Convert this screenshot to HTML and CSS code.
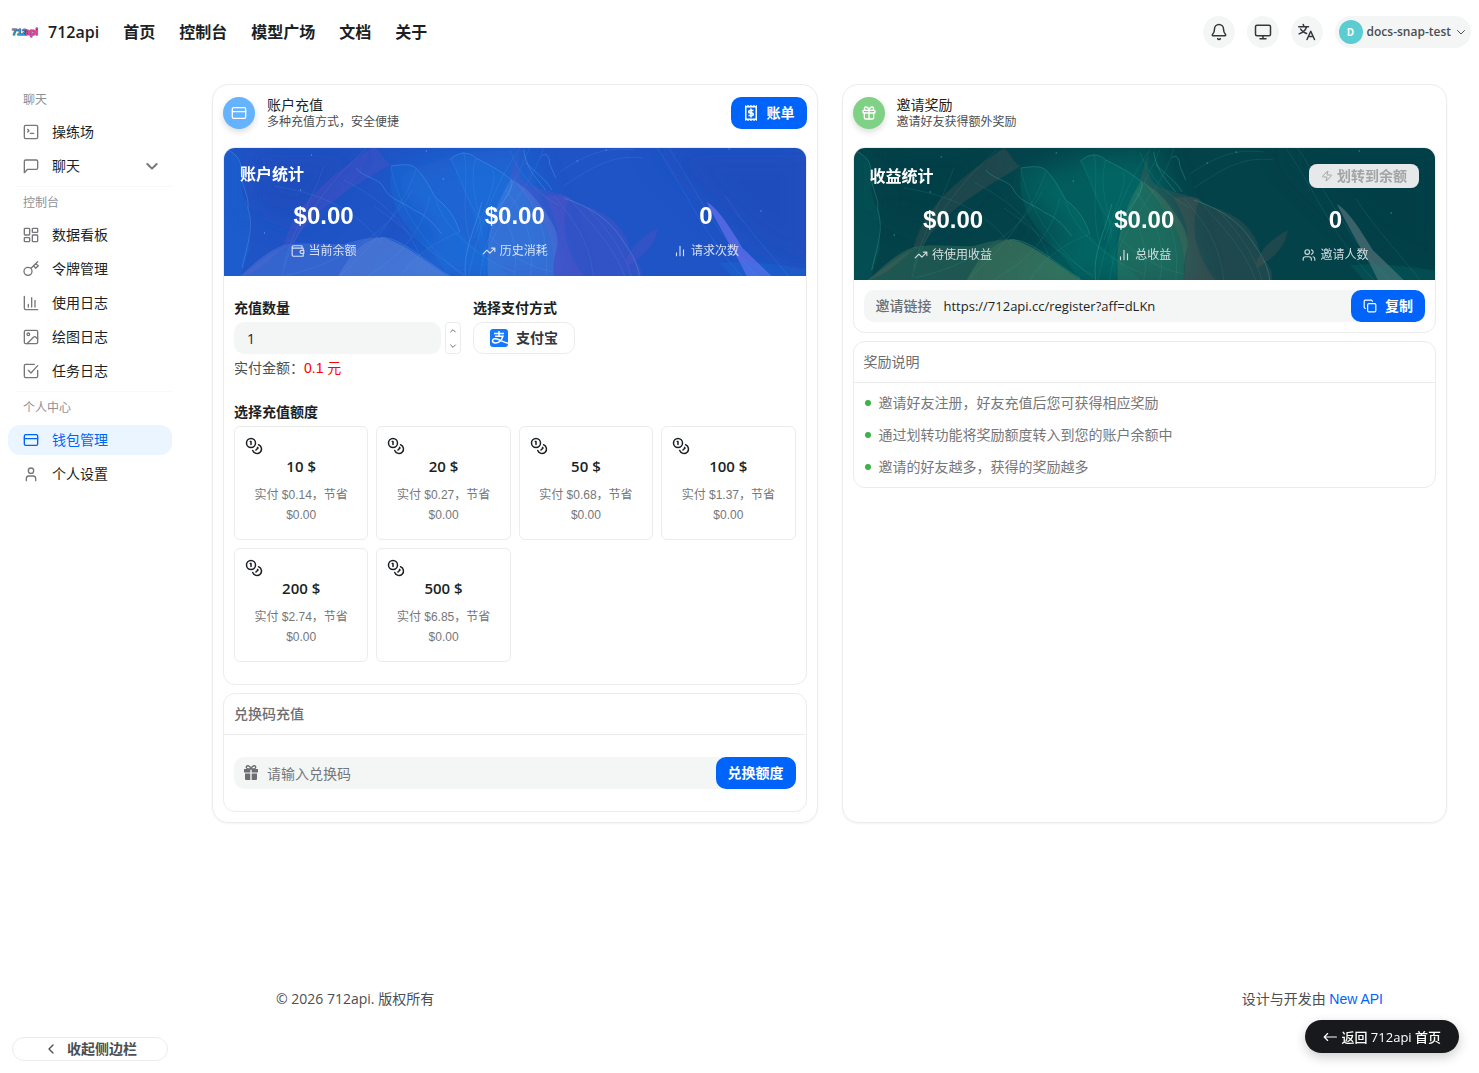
FILE: index.html
```html
<!DOCTYPE html>
<html lang="zh-CN">
  <head>
    <meta charset="UTF-8" />
    <meta name="viewport" content="width=device-width, initial-scale=1.0" />
    <title>712api - 钱包管理</title>
    <link rel="stylesheet" href="styles.css">
  </head>
  <body>
    <!-- shared icons -->
    <svg class="sprite" aria-hidden="true">
      <filter id="soft" x="-50%" y="-50%" width="200%" height="200%"><feGaussianBlur stdDeviation="14" /></filter>
      <symbol id="i-card" viewBox="0 0 24 24"><rect x="2" y="4" width="20" height="16" rx="2" /><path d="M2 10h20" /></symbol>
      <symbol id="i-gift" viewBox="0 0 24 24"><rect x="3" y="8" width="18" height="4" rx="1" /><path d="M12 8v13M19 12v7a2 2 0 0 1-2 2H7a2 2 0 0 1-2-2v-7M7.500 8a2.500 2.500 0 0 1 0-5C11 3 12 8 12 8s1-5 4.500-5a2.500 2.500 0 0 1 0 5" /></symbol>
      <symbol id="i-trend" viewBox="0 0 24 24"><path d="m22 7-8.500 8.500-5-5L2 17M16 7h6v6" /></symbol>
      <symbol id="i-bars" viewBox="0 0 24 24"><path d="M12 20V4M18 20V10M6 20v-5" /></symbol>
      <symbol id="i-down" viewBox="0 0 24 24"><path d="m5 9 7 7 7-7" /></symbol>
      <symbol id="i-coins" viewBox="0 0 24 24"><circle cx="8" cy="8" r="6" /><path d="M18.090 10.370A6 6 0 1 1 10.340 18M7 6h1v4M16.710 13.880l.7.710-2.820 2.820" /></symbol>
      <symbol id="waves" viewBox="0 0 582 132" preserveAspectRatio="xMidYMid slice">
        <g filter="url(#soft)">
          <path class="w-glow" d="M165 30 230 8 300 0 345 132H140L220 95Z" />
          <path class="w-dark" d="M30 0H150L80 80 30 60Z" />
          <path class="w-dark" d="M430 0H590V132L520 90Z" />
        </g>
        <path class="w-fold" d="M0 2c9 3 16 10 17 20 1 14-1 24 6 36 5 14 1 24 3 42-4 14-7 22-9 32H0Z" />
        <path class="w-veil" d="M150 0c8 6 10 16 17 18-34 22-74 40-98 80-14 2-34 18-54 34 20-6 30-18 44-30 10-40 38-66 91-102Z" />
        <path class="w-fold" d="M167 20c14-2 20-2 25 2 10 10 14 20 20 30 14 10 20 22 24 34 12 16 34 26 50 46H225c-20-40-64-50-58-112Z" />
        <path class="w-fold" d="M226 14c10-10 20-8 26-2 12 6 24 12 36 22 2 14-16 24-22 44-6 18-4 36-4 54-10-30-4-60-36-118Z" />
        <path class="w-dome" d="M14 132c16-14 30-28 46-33 20-4 42 0 60-1 14-4 24-7 40-7 22 8 44 26 68 41Z" />
        <path class="w-dome" d="M113 132c10-18 22-36 40-40 26 0 46 24 75 40Z" />
        <path class="w-veil" d="M296 0c-4 22-2 30 8 38 12 6 28 8 42 13-10 24-6 54 16 81h-32c4-34-8-66-44-100Z" />
        <path class="w-dome" d="M287 33c16 8 26 20 34 32 10 14 14 24 13 34-4 12-4 22-4 33h-66c0-26-4-54 23-99Z" />
        <path class="w-veil" d="M320 50c10-2 20-2 26 2 8 6 18 8 26 12 14 6 22 14 28 24 6 8 4 14 8 22 6 6 12 14 10 22h-88c0-30 14-40-10-82Z" />
        <path class="w-veil" d="M402 116c4-14 14-24 32-34-2 16-12 26-30 38Z" />
        <path class="w-spike" d="M483 56c12 6 26 30 36 46l31 30h-26c-10-22-26-46-41-76Z" />
        <path class="w-fold" d="M496 117c30-2 56 1 86 6v9h-72Z" />
        <path class="w-line" d="M143 2C110 30 70 80 58 130M100 20C90 50 66 90 60 120M50 40C90 46 130 60 158 98M167 20C174 60 200 100 240 130M192 24C180 60 150 100 116 130M206 50C200 80 180 110 140 132M150 60C180 80 210 110 240 128M120 34C150 50 180 70 196 110M188 44C170 80 120 118 60 130M212 54C220 80 250 110 290 126M236 86C210 96 190 110 176 132M228 14C240 40 244 60 262 80M252 12C244 40 256 60 258 90M240 6C246 30 236 60 246 96M268 24C276 30 262 60 250 92M296 2C270 40 256 80 244 132M306 2C290 40 262 80 256 132M320 0C310 40 280 60 262 110M286 4C296 30 312 46 336 60M290 34C316 60 326 96 322 132M282 44C304 72 312 100 306 132M276 60C292 90 294 110 290 132M266 90C280 104 300 120 330 126M345 52C370 80 390 100 402 132M330 50C356 80 366 100 370 132M364 62C384 84 400 104 408 132M336 26C360 10 380 0 410 4M340 40C370 20 390 8 420 12M432 0C460 40 480 90 520 132M444 0C470 40 500 100 536 132M502 50C520 80 550 110 566 132" />
        <path class="w-bright" d="M0 2c14 6 18 14 17 24 2 20 8 22 7 36 6 20 0 34-6 60M132 22c8 10 24 10 28 20 6 12 20 14 30 22 14 6 20 14 28 24M167 20c14-2 20-2 25 2 10 10 14 20 20 30 14 10 20 22 24 34M226 14c10-10 20-8 26-2 12 6 24 12 36 22 2 14-14 24-20 40M258 56c-6 26-20 50-16 76M302 16c8 10 20 16 26 28M318 10c4-4 8 0 8 8l6 14M300 4c2 16 10 26 22 40M340 52c24 8 44 20 56 38 8 12 18 24 20 42M156 92c20-2 40 20 70 38" />
        <path class="w-dots" d="M87 9h1M202 5h1M40 87h1M353 15h1M382 4h1M505 3h1M537 65h1M219 33h1M76 44h1" />
      </symbol>
    </svg>

    <header class="topbar">
      <a class="brand" href="#">
        <svg class="brand-logo" viewBox="0 0 32 18" aria-hidden="true">
          <text class="logo-num" x="4" y="12">712</text>
          <text class="logo-api" x="17" y="12">api</text>
        </svg>
        <span>712api</span>
      </a>
      <nav class="topnav">
        <a href="#">首页</a>
        <a href="#">控制台</a>
        <a href="#">模型广场</a>
        <a href="#">文档</a>
        <a href="#">关于</a>
      </nav>
      <div class="tools">
        <button class="round" aria-label="通知"><svg class="icon i18" viewBox="0 0 24 24"><path d="M10.300 21a2 2 0 0 0 3.400 0M3.300 15.300A1 1 0 0 0 4 17h16a1 1 0 0 0 .7-1.700C19.400 14 18 12.500 18 8A6 6 0 0 0 6 8c0 4.500-1.400 6-2.700 7.300Z" /></svg></button>
        <button class="round" aria-label="主题"><svg class="icon i18" viewBox="0 0 24 24"><rect x="2" y="3" width="20" height="14" rx="2" /><path d="M8 21h8M12 17v4" /></svg></button>
        <button class="round" aria-label="语言"><svg class="icon i18" viewBox="0 0 24 24"><path d="M1 5h13M7 2l1 3M3.500 8c1.500 3 5 5 8 6M11.500 5C10 10 6 13 1.500 14.500M12 22l5-11 5 11M13.800 18h6.400" /></svg></button>
        <button class="user">
          <span class="user-avatar">D</span>
          <span>docs-snap-test</span>
          <svg class="icon i12"><use href="#i-down" /></svg>
        </button>
      </div>
    </header>

    <div class="layout">
      <aside class="sidebar">
        <div class="group">
          <p class="group-title">聊天</p>
          <ul>
            <li><a href="#"><svg class="icon i16" viewBox="0 0 24 24"><rect x="2" y="2" width="20" height="20" rx="2" /><path d="m7 12 2-2-2-2M11 14h5" /></svg>操练场</a></li>
            <li><a href="#"><svg class="icon i16" viewBox="0 0 24 24"><path d="M22 15a2 2 0 0 1-2 2H7l-5 5V5a2 2 0 0 1 2-2h16a2 2 0 0 1 2 2Z" /></svg>聊天<svg class="icon i16 arrow"><use href="#i-down" /></svg></a></li>
          </ul>
        </div>
        <div class="group">
          <p class="group-title">控制台</p>
          <ul>
            <li><a href="#"><svg class="icon i16" viewBox="0 0 24 24"><rect x="2" y="2" width="8" height="10" rx="1" /><rect x="14" y="2" width="8" height="6" rx="1" /><rect x="14" y="12" width="8" height="10" rx="1" /><rect x="2" y="16" width="8" height="6" rx="1" /></svg>数据看板</a></li>
            <li><a href="#"><svg class="icon i16" viewBox="0 0 24 24"><circle cx="7.500" cy="15.500" r="6" /><path d="m12 11 10-10M16 7l3 4 4-4-4-3" /></svg>令牌管理</a></li>
            <li><a href="#"><svg class="icon i16" viewBox="0 0 24 24"><path d="M2 2v18a2 2 0 0 0 2 2h18M18 18V8M13 18V4M8 18v-4" /></svg>使用日志</a></li>
            <li><a href="#"><svg class="icon i16" viewBox="0 0 24 24"><rect x="2" y="2" width="20" height="20" rx="2" /><circle cx="8" cy="8" r="2" /><path d="m22 15-3-3a2 2 0 0 0-3 0l-10 10" /></svg>绘图日志</a></li>
            <li><a href="#"><svg class="icon i16" viewBox="0 0 24 24"><path d="M22 11v9a2 2 0 0 1-2 2H4a2 2 0 0 1-2-2V4a2 2 0 0 1 2-2h13M8 11l4 4L22 4" /></svg>任务日志</a></li>
          </ul>
        </div>
        <div class="group">
          <p class="group-title">个人中心</p>
          <ul>
            <li><a class="active" href="#"><svg class="icon i16"><use href="#i-card" /></svg>钱包管理</a></li>
            <li><a href="#"><svg class="icon i16" viewBox="0 0 24 24"><circle cx="12" cy="7" r="4" /><path d="M19 22v-3a4 4 0 0 0-4-4H9a4 4 0 0 0-4 4v3" /></svg>个人设置</a></li>
          </ul>
        </div>
        <button class="collapse"><svg class="icon i16" viewBox="0 0 24 24"><path d="m15 6-6 6 6 6" /></svg>收起侧边栏</button>
      </aside>

      <div class="page">
        <main class="panels">
          <section class="panel">
            <div class="panel-head">
              <span class="badge blue"><svg class="icon i16"><use href="#i-card" /></svg></span>
              <div class="panel-title">
                <h2>账户充值</h2>
                <p>多种充值方式，安全便捷</p>
              </div>
              <button class="btn bill"><svg class="bill-icon" viewBox="0 0 16 16"><path fill="currentColor" fill-rule="evenodd" d="M2 0l1.500 1L5 0l1.500 1L8 0l1.500 1L11 0l1.500 1L14 0v16l-1.500-1-1.500 1-1.500-1L8 16l-1.500-1L5 16l-1.500-1L2 16ZM3.500 2.500v11h9v-11Z" /><path fill="none" stroke="currentColor" stroke-width="1.600" d="M10.500 5.500H7a1.200 1.200 0 0 0 0 2.500h2a1.200 1.200 0 0 1 0 2.500H5.500M8 3.500v9" /></svg>账单</button>
            </div>

            <div class="box">
              <div class="banner banner-blue">
                <svg class="art" aria-hidden="true"><use href="#waves" /></svg>
                <div class="banner-head"><h3>账户统计</h3></div>
                <div class="stats">
                  <div><strong>$0.00</strong><span><svg class="icon i14" viewBox="0 0 24 24"><path d="M19 7V4a1 1 0 0 0-1-1H4a2 2 0 0 0 0 4h16a1 1 0 0 1 1 1v3M21 16v4a1 1 0 0 1-1 1H4a2 2 0 0 1-2-2V5M22 11v5h-4a2.500 2.500 0 0 1 0-5Z" /></svg>当前余额</span></div>
                  <div><strong>$0.00</strong><span><svg class="icon i14"><use href="#i-trend" /></svg>历史消耗</span></div>
                  <div><strong>0</strong><span><svg class="icon i14"><use href="#i-bars" /></svg>请求次数</span></div>
                </div>
              </div>

              <form class="recharge">
                <div class="fields">
                  <div class="field">
                    <label for="amount">充值数量</label>
                    <div class="number">
                      <input type="text" id="amount" value="1" />
                      <div class="stepper">
                        <button type="button" aria-label="增加"><svg class="icon i8 up"><use href="#i-down" /></svg></button>
                        <button type="button" aria-label="减少"><svg class="icon i8"><use href="#i-down" /></svg></button>
                      </div>
                    </div>
                    <p class="pay">实付金额：<span>0.1 元</span></p>
                  </div>
                  <div class="field">
                    <p class="label">选择支付方式</p>
                    <button type="button" class="alipay"><svg viewBox="0 0 18 18"><rect width="18" height="18" rx="3" fill="#1677ff" /><path fill="none" stroke="#fff" stroke-width="1.500" d="M4 4.500h10M9 2v5M5 7.200h8c-1.500 4-4.500 6.800-7.500 6.800-2 0-3-1-3-2.200 0-2.300 3-2.600 6-1.300s6.500 3.300 9.500 3.700" /></svg>支付宝</button>
                  </div>
                </div>

                <p class="label">选择充值额度</p>
                <div class="amounts">
                  <button type="button" class="amount"><svg class="icon i18"><use href="#i-coins" /></svg><b>10 $</b><span>实付 $0.14，节省 $0.00</span></button>
                  <button type="button" class="amount"><svg class="icon i18"><use href="#i-coins" /></svg><b>20 $</b><span>实付 $0.27，节省 $0.00</span></button>
                  <button type="button" class="amount"><svg class="icon i18"><use href="#i-coins" /></svg><b>50 $</b><span>实付 $0.68，节省 $0.00</span></button>
                  <button type="button" class="amount"><svg class="icon i18"><use href="#i-coins" /></svg><b>100 $</b><span>实付 $1.37，节省 $0.00</span></button>
                  <button type="button" class="amount"><svg class="icon i18"><use href="#i-coins" /></svg><b>200 $</b><span>实付 $2.74，节省 $0.00</span></button>
                  <button type="button" class="amount"><svg class="icon i18"><use href="#i-coins" /></svg><b>500 $</b><span>实付 $6.85，节省 $0.00</span></button>
                </div>
              </form>
            </div>

            <div class="box">
              <h4 class="box-title strong">兑换码充值</h4>
              <form class="redeem">
                <div class="input-row">
                  <svg class="gift-icon" viewBox="0 0 16 16"><path fill="currentColor" d="M1 4h6.300v3.500H1ZM8.700 4H15v3.500H8.700ZM2 8.500h5.300V15H3a1 1 0 0 1-1-1ZM8.700 8.500H14V14a1 1 0 0 1-1 1H8.700Z" /><path fill="none" stroke="currentColor" stroke-width="1.400" d="M8 4C7 0 3 0 3.300 2.500 3.500 4 6 4 8 4s4.500 0 4.700-1.500C13 0 9 0 8 4Z" /></svg>
                  <input type="text" placeholder="请输入兑换码" aria-label="兑换码" />
                  <button type="button" class="btn">兑换额度</button>
                </div>
              </form>
            </div>
          </section>

          <section class="panel">
            <div class="panel-head">
              <span class="badge green"><svg class="icon i16"><use href="#i-gift" /></svg></span>
              <div class="panel-title">
                <h2>邀请奖励</h2>
                <p>邀请好友获得额外奖励</p>
              </div>
            </div>

            <div class="box">
              <div class="banner banner-green">
                <svg class="art" aria-hidden="true"><use href="#waves" /></svg>
                <div class="banner-head">
                  <h3>收益统计</h3>
                  <button class="transfer" disabled><svg class="icon i12" viewBox="0 0 24 24"><path d="M4 14a1 1 0 0 1-.8-1.600L13 2.300a.5.5 0 0 1 .9.500L12 8.700A1 1 0 0 0 13 10h7a1 1 0 0 1 .8 1.600L11 21.700a.5.5 0 0 1-.9-.500L12 15.300A1 1 0 0 0 11 14Z" /></svg>划转到余额</button>
                </div>
                <div class="stats">
                  <div><strong>$0.00</strong><span><svg class="icon i14"><use href="#i-trend" /></svg>待使用收益</span></div>
                  <div><strong>$0.00</strong><span><svg class="icon i14"><use href="#i-bars" /></svg>总收益</span></div>
                  <div><strong>0</strong><span><svg class="icon i14" viewBox="0 0 24 24"><circle cx="9" cy="7" r="4" /><path d="M16 21v-2a4 4 0 0 0-4-4H6a4 4 0 0 0-4 4v2M22 21v-2a4 4 0 0 0-3-3.900M16 3.100a4 4 0 0 1 0 7.800" /></svg>邀请人数</span></div>
                </div>
              </div>
              <div class="invite">
                <div class="input-row">
                  <label for="link">邀请链接</label>
                  <input class="link" type="text" id="link" value="https://712api.cc/register?aff=dLKn" readonly />
                  <button class="btn"><svg class="icon i14" viewBox="0 0 24 24"><rect x="8" y="8" width="14" height="14" rx="2" /><path d="M4 16a2 2 0 0 1-2-2V4a2 2 0 0 1 2-2h10a2 2 0 0 1 2 2" /></svg>复制</button>
                </div>
              </div>
            </div>

            <div class="box">
              <h4 class="box-title">奖励说明</h4>
              <ul class="rules">
                <li>邀请好友注册，好友充值后您可获得相应奖励</li>
                <li>通过划转功能将奖励额度转入到您的账户余额中</li>
                <li>邀请的好友越多，获得的奖励越多</li>
              </ul>
            </div>
          </section>
        </main>

        <footer class="footer">
          <span>© 2026 712api. 版权所有</span>
          <span>设计与开发由 <a href="#">New API</a></span>
        </footer>
      </div>
    </div>

    <a class="back-home" href="#"><svg class="icon i14" viewBox="0 0 24 24"><path d="M23 12H2M8 6l-6 6 6 6" /></svg>返回 712api 首页</a>
  </body>
</html>
```
FILE: styles.css
```css
* {
  box-sizing: border-box;
}
body {
  margin: 0;
  min-height: 100vh;
  display: flex;
  flex-direction: column;
  font-family: "Open Sans", "Noto Sans CJK SC", sans-serif;
  font-size: 14px;
  line-height: 20px;
  color: #1c1f23;
  background-color: #fff;
}
h2, h3, h4, p, ul {
  margin: 0;
  padding: 0;
}
ul {
  list-style: none;
}
a {
  color: inherit;
  text-decoration: none;
}
button, input {
  font: inherit;
  color: inherit;
  border: none;
  padding: 0;
  background: none;
}
button {
  cursor: pointer;
}
.sprite {
  position: absolute;
  width: 0;
  height: 0;
}

/* icons */
.icon {
  flex: none;
  fill: none;
  stroke: currentColor;
  stroke-width: 2;
  stroke-linecap: round;
  stroke-linejoin: round;
}
.i8 { width: 8px; height: 8px; }
.i12 { width: 12px; height: 12px; }
.i14 { width: 14px; height: 14px; }
.i16 { width: 16px; height: 16px; }
.i18 { width: 18px; height: 18px; }

/* top bar */
.topbar {
  display: flex;
  align-items: center;
  height: 64px;
  padding: 0 8px;
  font-size: 16px;
  font-weight: 600;
}
.brand {
  display: flex;
  align-items: center;
  gap: 8px;
  margin-right: 24px;
}
.brand-logo {
  width: 32px;
  height: 18px;
}
.brand-logo text {
  font-family: "Liberation Sans", sans-serif;
  font-size: 9px;
  font-weight: 700;
  paint-order: stroke;
  stroke-width: 1px;
}
.logo-num {
  fill: #279fdf;
  stroke: #31506f;
}
.logo-api {
  fill: #ee4b9c;
  stroke: #7a315f;
}
.topnav {
  display: flex;
  gap: 24px;
}
.tools {
  display: flex;
  gap: 12px;
  margin-left: auto;
}
.round {
  display: flex;
  align-items: center;
  justify-content: center;
  width: 32px;
  height: 32px;
  border-radius: 50%;
  background-color: #f4f6f6;
  color: #34373b;
}
.user {
  display: flex;
  align-items: center;
  gap: 4px;
  height: 32px;
  padding: 0 4px;
  border-radius: 16px;
  background-color: #f4f6f6;
  color: #4b4e52;
  font-size: 12px;
}
.user-avatar {
  width: 24px;
  height: 24px;
  border-radius: 50%;
  background-color: #5accd2;
  color: #fff;
  font-size: 10px;
  font-weight: 700;
  line-height: 24px;
}

/* sidebar */
.layout {
  flex: 1;
  display: flex;
}
.sidebar {
  flex: none;
  display: flex;
  flex-direction: column;
  width: 180px;
  padding: 24px 8px 12px;
}
.group {
  padding-bottom: 4px;
  margin-bottom: 4px;
}
.group + .group::before {
  content: "";
  display: block;
  height: 1px;
  margin: 0 0 4px 8px;
  background-color: #f8f8f9;
}
.group + .group {
  margin-top: -3px;
}
.group-title {
  padding-left: 15px;
  margin-bottom: 5px;
  font-size: 12px;
  line-height: 24px;
  color: #8f9194;
}
.group ul {
  display: flex;
  flex-direction: column;
  gap: 4px;
}
.group li a {
  display: flex;
  align-items: center;
  gap: 13px;
  height: 30px;
  padding: 0 12px 0 15px;
  border-radius: 12px;
}
.group .icon {
  color: #75777a;
}
.group .arrow {
  margin-left: auto;
  stroke-width: 3;
}
.group .active {
  background-color: #eaf5ff;
}
.group .active, .group .active .icon {
  color: #0064fa;
}
.collapse {
  display: flex;
  align-items: center;
  justify-content: center;
  gap: 8px;
  height: 24px;
  margin: auto 4px 0;
  border: 1px solid #ececed;
  border-radius: 12px;
  color: #4b4e52;
  font-weight: 600;
}

/* panels */
.page {
  flex: 1;
  min-width: 0;
  display: flex;
  flex-direction: column;
}
.panels {
  display: grid;
  grid-template-columns: 1fr 1fr;
  gap: 24px;
  padding: 20px 32px;
}
.panel {
  min-width: 0;
  padding: 12px 10px 10px;
  border: 1px solid #ececed;
  border-radius: 16px;
  box-shadow: 0 1px 2px rgba(0, 0, 0, 0.05);
}
.panel-head {
  display: flex;
  align-items: center;
  gap: 12px;
  height: 32px;
  margin-bottom: 18px;
}
.panel-title {
  padding-top: 2px;
}
.panel-title h2 {
  font-size: 14px;
  font-weight: 400;
  line-height: 16px;
}
.panel-title p {
  font-size: 12px;
  line-height: 18px;
  color: #4b4e52;
}
.badge {
  display: flex;
  align-items: center;
  justify-content: center;
  width: 32px;
  height: 32px;
  border-radius: 50%;
  color: #fff;
  box-shadow: 0 3px 6px rgba(0, 0, 0, 0.14);
}
.badge.blue {
  background-color: #65b2ff;
}
.badge.green {
  background-color: #7fd186;
}
.btn {
  display: flex;
  flex: none;
  align-items: center;
  justify-content: center;
  gap: 8px;
  height: 32px;
  padding: 0 12px;
  border-radius: 10px;
  background-color: #0064fa;
  color: #fff;
  font-weight: 700;
}
.bill {
  margin-left: auto;
}
.bill-icon {
  width: 16px;
  height: 16px;
}
.box {
  overflow: hidden;
  border: 1px solid #ececed;
  border-radius: 12px;
}
.box + .box {
  margin-top: 8px;
}
.box-title {
  padding: 10px;
  border-bottom: 1px solid #ececed;
  font-size: 14px;
  font-weight: 400;
  color: #6c6e71;
}
.box-title.strong {
  font-weight: 500;
}

/* banners */
.banner {
  position: relative;
  padding: 16px 16px 15px;
  color: #fff;
}
.banner-blue {
  background-color: #1f54c6;
  --glow: #1588ea;
  --veil: #6a4fc8;
  --dome: #7a9ae6;
  --dark: #1a48b8;
  --line: #6ab4f4;
  --spike: #6670ee;
}
.banner-green {
  background-color: #04424a;
  --glow: #079184;
  --veil: #6b5a58;
  --dome: #6f9a68;
  --dark: #003a43;
  --line: #4ab8a8;
  --spike: #527178;
}
.art {
  position: absolute;
  inset: 0;
  width: 100%;
  height: 100%;
}
.w-glow { fill: var(--glow); opacity: 0.35; }
.w-dark { fill: var(--dark); opacity: 0.6; }
.w-fold { fill: var(--glow); opacity: 0.16; }
.w-veil { fill: var(--veil); opacity: 0.25; }
.w-dome { fill: var(--dome); opacity: 0.24; }
.w-spike { fill: var(--spike); opacity: 0.7; }
.w-line {
  fill: none;
  stroke: var(--line);
  stroke-width: 1;
  opacity: 0.14;
}
.w-bright {
  fill: none;
  stroke: var(--line);
  stroke-width: 1;
  opacity: 0.3;
}
.w-dots {
  stroke: var(--line);
  stroke-width: 2;
  opacity: 0.5;
}
.banner-head {
  position: relative;
  display: flex;
  align-items: center;
  justify-content: space-between;
}
.banner-head h3 {
  font-size: 16px;
  font-weight: 700;
  line-height: 20px;
}
.transfer {
  display: flex;
  align-items: center;
  gap: 4px;
  height: 24px;
  padding: 0 12px;
  border-radius: 8px;
  background-color: #e6e8ea;
  color: #a2a4a6;
  font-weight: 600;
  cursor: default;
}
.stats {
  position: relative;
  display: grid;
  grid-template-columns: repeat(3, 1fr);
  gap: 24px;
  margin-top: 16px;
  text-align: center;
}
.stats strong {
  display: block;
  margin-bottom: 9px;
  font-family: "Liberation Sans", sans-serif;
  font-size: 24px;
  line-height: 32px;
}
.stats span {
  display: flex;
  align-items: center;
  justify-content: center;
  gap: 4px;
  font-size: 12px;
  color: rgba(255, 255, 255, 0.8);
}

/* recharge form */
.recharge {
  padding: 22px 10px;
}
.fields {
  display: flex;
  gap: 12px;
  margin-bottom: 24px;
}
.field:first-child {
  flex: 0 1 227px;
}
.field label, .label {
  display: block;
  margin-bottom: 4px;
  font-weight: 600;
}
.number {
  display: flex;
  gap: 4px;
}
.number input {
  flex: 1;
  min-width: 0;
  height: 32px;
  padding: 0 13px;
  border-radius: 10px;
  background-color: #f4f6f6;
}
.stepper {
  display: flex;
  flex-direction: column;
  width: 16px;
  border: 1px solid #ececed;
  border-radius: 4px;
}
.stepper button {
  flex: 1;
  display: flex;
  align-items: center;
  justify-content: center;
  color: #6c6e71;
}
.stepper .icon {
  stroke-width: 3;
}
.up {
  transform: rotate(180deg);
}
.pay {
  margin-top: 4px;
  color: #4b4e52;
}
.pay span {
  font-family: "Liberation Sans", "Noto Sans CJK SC", sans-serif;
  color: #f00;
}
.alipay {
  display: flex;
  align-items: center;
  gap: 8px;
  height: 32px;
  padding: 0 16px;
  border: 1px solid #ececed;
  border-radius: 10px;
  color: #34373b;
  font-weight: 600;
}
.alipay svg {
  width: 18px;
  height: 18px;
}
.amounts {
  display: grid;
  grid-template-columns: repeat(4, 1fr);
  gap: 8px;
}
.amount {
  display: flex;
  flex-direction: column;
  align-items: center;
  padding: 10px 10px 14px;
  border: 1px solid #ececed;
  border-radius: 6px;
}
.amount .icon {
  align-self: flex-start;
}
.amount b {
  margin-bottom: 8px;
  font-size: 15px;
  font-weight: 600;
  line-height: 22px;
}
.amount span {
  font-family: "Liberation Sans", "Noto Sans CJK SC", sans-serif;
  font-size: 12px;
  color: #75777a;
}

/* input rows with a button at the end */
.redeem {
  padding: 22px 10px;
}
.invite {
  padding: 10px;
}
.input-row {
  display: flex;
  align-items: center;
  border-radius: 10px;
  background-color: #f4f6f6;
}
.input-row input {
  flex: 1;
  min-width: 0;
  height: 32px;
  outline: none;
}
.input-row .link {
  font-size: 13px;
}
.input-row input::placeholder {
  color: #75777a;
}
.input-row label {
  padding: 0 12px;
  font-weight: 500;
  color: #6c6e71;
}
.gift-icon {
  width: 16px;
  height: 16px;
  margin: 0 8px 0 9px;
  color: #6c6e71;
}
.rules {
  padding: 10px;
  display: flex;
  flex-direction: column;
  gap: 12px;
  color: #75777a;
}
.rules li {
  display: flex;
  align-items: center;
  gap: 8px;
}
.rules li::before {
  content: "";
  width: 6px;
  height: 6px;
  margin-left: 1px;
  border-radius: 50%;
  background-color: #3bb346;
}

.footer {
  display: flex;
  justify-content: space-between;
  margin-top: auto;
  padding: 0 96px 64px;
  color: #4b4e52;
}
.footer a {
  font-family: "Liberation Sans", sans-serif;
  color: #0064fa;
}
.back-home {
  position: fixed;
  right: 20px;
  bottom: 20px;
  display: flex;
  align-items: center;
  gap: 4px;
  height: 33px;
  padding: 0 18px;
  border-radius: 17px;
  background-color: #18191c;
  color: #fff;
  font-size: 13px;
  font-weight: 500;
  box-shadow: 0 4px 12px rgba(0, 0, 0, 0.2);
}
```
